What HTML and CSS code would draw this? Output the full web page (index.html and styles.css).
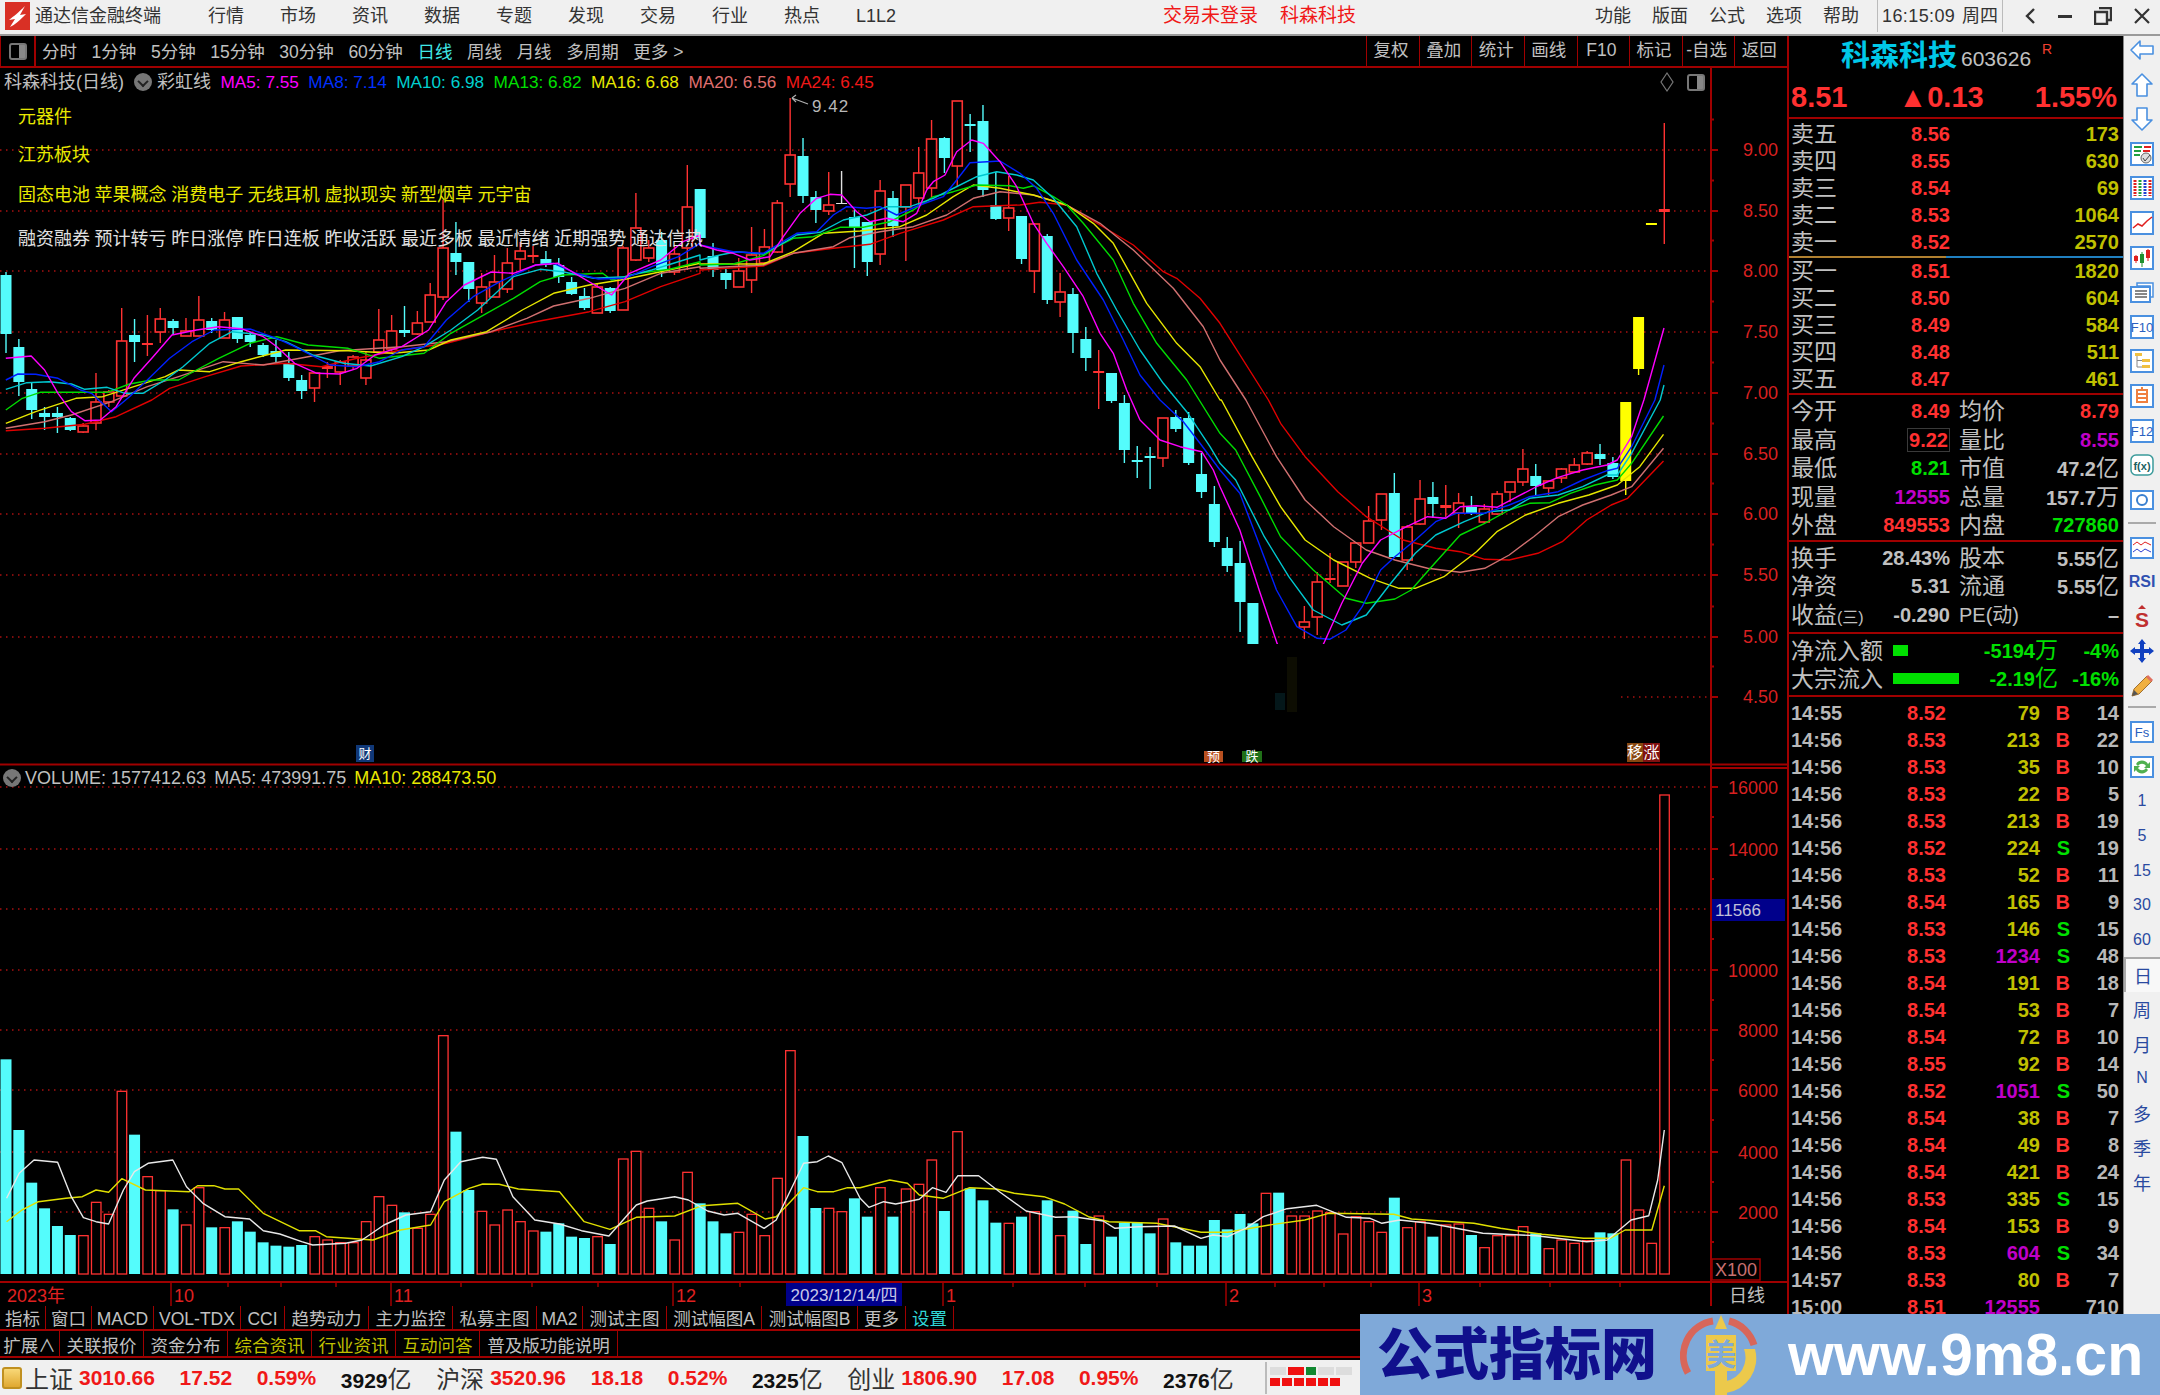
FILE: index.html
```html
<!DOCTYPE html>
<html lang="zh-CN">
<head>
  <meta charset="UTF-8">
  <title>通达信金融终端</title>
  <link rel="stylesheet" href="styles.css">
</head>
<body>
  <div class="menubar">
    <svg class="logo" viewBox="0 0 25 28"><rect width="25" height="28" fill="#d93025"/><path d="M4 18 C9 14 13 11 20 4 L15 13 L21 12 C15 18 10 23 5 25 L10 17 Z" fill="#fff"/></svg>
    <span class="brand">通达信金融终端</span>
    <nav class="menu-nav">
      <span>行情</span><span>市场</span><span>资讯</span><span>数据</span><span>专题</span><span>发现</span><span>交易</span><span>行业</span><span>热点</span><span>L1L2</span>
    </nav>
    <div class="menu-alert"><span>交易未登录</span><span>科森科技</span></div>
    <div class="menu-right">
      <span>功能</span><span>版面</span><span>公式</span><span>选项</span><span>帮助</span>
      <div class="clock"><span class="clock-time">16:15:09</span><span>周四</span></div>
      <div class="win-btns">
        <svg width="11" height="18" viewBox="0 0 11 18"><path d="M9 2 L2 9 L9 16" fill="none" stroke="#333" stroke-width="2.4"/></svg>
        <svg width="14" height="18" viewBox="0 0 14 18"><rect y="8" width="14" height="3" fill="#333"/></svg>
        <svg width="18" height="18" viewBox="0 0 18 18"><path d="M5 1 H17 V13 H13 M1 5 H13 V17 H1 Z" fill="none" stroke="#333" stroke-width="2.4"/></svg>
        <svg width="16" height="18" viewBox="0 0 16 18"><path d="M1 2 L15 16 M15 2 L1 16" stroke="#333" stroke-width="2.2"/></svg>
      </div>
    </div>
  </div>

  <div class="main">
    <div class="left">
      <div class="period-bar">
        <div class="toggle-cell"><span class="toggle-box"></span></div>
        <div class="periods">
          <span>分时</span><span>1分钟</span><span>5分钟</span><span>15分钟</span><span>30分钟</span><span>60分钟</span><span class="on">日线</span><span>周线</span><span>月线</span><span>多周期</span><span>更多 &gt;</span>
        </div>
        <div class="tools">
          <span>复权</span><span>叠加</span><span>统计</span><span>画线</span><span>F10</span><span>标记</span><span>-自选</span><span>返回</span>
        </div>
      </div>

      <div class="chart-wrap">
        <svg id="chart" class="chart" width="1788" height="1238" viewBox="0 68 1788 1238"></svg>

        <div class="legend legend-price">
          <span class="grey leg-cn">科森科技(日线)</span>
          <span class="drop"></span>
          <span class="grey leg-cn">彩虹线</span>
          <span class="c-ma5">MA5: 7.55</span>
          <span class="c-ma8">MA8: 7.14</span>
          <span class="c-ma10">MA10: 6.98</span>
          <span class="c-ma13">MA13: 6.82</span>
          <span class="c-ma16">MA16: 6.68</span>
          <span class="c-ma20">MA20: 6.56</span>
          <span class="c-ma24">MA24: 6.45</span>
        </div>

        <div class="tags">
          <div>元器件</div>
          <div>江苏板块</div>
          <div class="tag-mid">固态电池 苹果概念 消费电子 无线耳机 虚拟现实 新型烟草 元宇宙</div>
          <div class="tag-white">融资融券 预计转亏 昨日涨停 昨日连板 昨收活跃 最近多板 最近情绪 近期强势 通达信热</div>
        </div>

        <div class="corner-marks">
          <svg width="14" height="22" viewBox="0 0 14 22"><path d="M7 2 L13 11 L7 20 L1 11 Z" fill="none" stroke="#777" stroke-width="1.2"/></svg>
          <span class="toggle-box"></span>
        </div>

        <div class="legend legend-vol">
          <span class="drop"></span>
          <span class="grey">VOLUME: 1577412.63</span>
          <span class="grey">MA5: 473991.75</span>
          <span class="c-ma16">MA10: 288473.50</span>
        </div>
      </div>

      <div class="tab-row">
        <span class="tab w46">指标</span><span class="tab w46">窗口</span><span class="tab w62">MACD</span><span class="tab w87">VOL-TDX</span><span class="tab w44">CCI</span><span class="tab w84">趋势动力</span><span class="tab w84">主力监控</span><span class="tab w84">私募主图</span><span class="tab w46">MA2</span><span class="tab w84">测试主图</span><span class="tab w95">测试幅图A</span><span class="tab w96">测试幅图B</span><span class="tab w48">更多</span><span class="tab w48 tab-cyan">设置</span>
      </div>
      <div class="tab-row tab-row-2">
        <span class="tab w60">扩展∧</span><span class="tab w84">关联报价</span><span class="tab w84">资金分布</span><span class="tab w84 tab-olive">综合资讯</span><span class="tab w84 tab-olive">行业资讯</span><span class="tab w84 tab-olive">互动问答</span><span class="tab w138">普及版功能说明</span>
      </div>
    </div>

    <div class="quote">
      <div class="q-head">
        <span class="q-name">科森科技</span><span class="q-code">603626</span><span class="q-r">R</span>
      </div>
      <div class="q-price">
        <span>8.51</span><span>▲0.13</span><span>1.55%</span>
      </div>

      <div class="book book-sell">
        <div class="book-row"><span>卖五</span><b class="red">8.56</b><b class="olive">173</b></div>
        <div class="book-row"><span>卖四</span><b class="red">8.55</b><b class="olive">630</b></div>
        <div class="book-row"><span>卖三</span><b class="red">8.54</b><b class="olive">69</b></div>
        <div class="book-row"><span>卖二</span><b class="red">8.53</b><b class="olive">1064</b></div>
        <div class="book-row"><span>卖一</span><b class="red">8.52</b><b class="olive">2570</b></div>
      </div>
      <div class="book-split"></div>
      <div class="book q-sect">
        <div class="book-row"><span>买一</span><b class="red">8.51</b><b class="olive">1820</b></div>
        <div class="book-row"><span>买二</span><b class="red">8.50</b><b class="olive">604</b></div>
        <div class="book-row"><span>买三</span><b class="red">8.49</b><b class="olive">584</b></div>
        <div class="book-row"><span>买四</span><b class="red">8.48</b><b class="olive">511</b></div>
        <div class="book-row"><span>买五</span><b class="red">8.47</b><b class="olive">461</b></div>
      </div>

      <div class="stats q-sect">
        <div class="stat-row"><span>今开</span><b class="red">8.49</b><span>均价</span><b class="red">8.79</b></div>
        <div class="stat-row"><span>最高</span><b class="red"><i class="hi-box">9.22</i></b><span>量比</span><b class="purple">8.55</b></div>
        <div class="stat-row"><span>最低</span><b class="green">8.21</b><span>市值</span><b class="grey">47.2<i class="unit">亿</i></b></div>
        <div class="stat-row"><span>现量</span><b class="purple">12555</b><span>总量</span><b class="grey">157.7<i class="unit">万</i></b></div>
        <div class="stat-row"><span>外盘</span><b class="red">849553</b><span>内盘</span><b class="green">727860</b></div>
      </div>
      <div class="stats q-sect q-sect-pad">
        <div class="stat-row"><span>换手</span><b class="grey">28.43%</b><span>股本</span><b class="grey">5.55<i class="unit">亿</i></b></div>
        <div class="stat-row"><span>净资</span><b class="grey">5.31</b><span>流通</span><b class="grey">5.55<i class="unit">亿</i></b></div>
        <div class="stat-row"><span class="nowrap">收益<i class="tiny">(三)</i></span><b class="grey">-0.290</b><span class="nowrap pe">PE(动)</span><b class="grey">–</b></div>
      </div>
      <div class="flow q-sect q-sect-pad">
        <div class="flow-row"><span>净流入额</span><div class="flow-bar" style="width:15px"></div><b class="green">-5194<i class="unit">万</i></b><b class="green">-4%</b></div>
        <div class="flow-row"><span>大宗流入</span><div class="flow-bar" style="width:66px"></div><b class="green">-2.19<i class="unit">亿</i></b><b class="green">-16%</b></div>
      </div>

      <div class="trades">
        <div class="trade"><b>14:55</b><b class="red">8.52</b><b class="olive">79</b><b class="red">B</b><b>14</b></div>
        <div class="trade"><b>14:56</b><b class="red">8.53</b><b class="olive">213</b><b class="red">B</b><b>22</b></div>
        <div class="trade"><b>14:56</b><b class="red">8.53</b><b class="olive">35</b><b class="red">B</b><b>10</b></div>
        <div class="trade"><b>14:56</b><b class="red">8.53</b><b class="olive">22</b><b class="red">B</b><b>5</b></div>
        <div class="trade"><b>14:56</b><b class="red">8.53</b><b class="olive">213</b><b class="red">B</b><b>19</b></div>
        <div class="trade"><b>14:56</b><b class="red">8.52</b><b class="olive">224</b><b class="green">S</b><b>19</b></div>
        <div class="trade"><b>14:56</b><b class="red">8.53</b><b class="olive">52</b><b class="red">B</b><b>11</b></div>
        <div class="trade"><b>14:56</b><b class="red">8.54</b><b class="olive">165</b><b class="red">B</b><b>9</b></div>
        <div class="trade"><b>14:56</b><b class="red">8.53</b><b class="olive">146</b><b class="green">S</b><b>15</b></div>
        <div class="trade"><b>14:56</b><b class="red">8.53</b><b class="purple">1234</b><b class="green">S</b><b>48</b></div>
        <div class="trade"><b>14:56</b><b class="red">8.54</b><b class="olive">191</b><b class="red">B</b><b>18</b></div>
        <div class="trade"><b>14:56</b><b class="red">8.54</b><b class="olive">53</b><b class="red">B</b><b>7</b></div>
        <div class="trade"><b>14:56</b><b class="red">8.54</b><b class="olive">72</b><b class="red">B</b><b>10</b></div>
        <div class="trade"><b>14:56</b><b class="red">8.55</b><b class="olive">92</b><b class="red">B</b><b>14</b></div>
        <div class="trade"><b>14:56</b><b class="red">8.52</b><b class="purple">1051</b><b class="green">S</b><b>50</b></div>
        <div class="trade"><b>14:56</b><b class="red">8.54</b><b class="olive">38</b><b class="red">B</b><b>7</b></div>
        <div class="trade"><b>14:56</b><b class="red">8.54</b><b class="olive">49</b><b class="red">B</b><b>8</b></div>
        <div class="trade"><b>14:56</b><b class="red">8.54</b><b class="olive">421</b><b class="red">B</b><b>24</b></div>
        <div class="trade"><b>14:56</b><b class="red">8.53</b><b class="olive">335</b><b class="green">S</b><b>15</b></div>
        <div class="trade"><b>14:56</b><b class="red">8.54</b><b class="olive">153</b><b class="red">B</b><b>9</b></div>
        <div class="trade"><b>14:56</b><b class="red">8.53</b><b class="purple">604</b><b class="green">S</b><b>34</b></div>
        <div class="trade"><b>14:57</b><b class="red">8.53</b><b class="olive">80</b><b class="red">B</b><b>7</b></div>
        <div class="trade"><b>15:00</b><b class="red">8.51</b><b class="purple">12555</b><b></b><b>710</b></div>
      </div>
    </div>

    <div class="sidebar">
      <div class="side-item"><svg width="26" height="22" viewBox="0 0 26 22"><path d="M2 11 L11 2 V7 H24 V15 H11 V20 Z" class="arrow"/></svg></div>
      <div class="side-item"><svg width="24" height="26" viewBox="0 0 24 26"><path d="M12 2 L22 12 H17 V24 H7 V12 H2 Z" class="arrow"/></svg></div>
      <div class="side-item"><svg width="24" height="26" viewBox="0 0 24 26"><path d="M12 24 L22 14 H17 V2 H7 V14 H2 Z" class="arrow"/></svg></div>
      <div class="side-item"><svg width="24" height="24" viewBox="0 0 24 24"><rect x="1" y="1" width="22" height="22" class="box"/><path d="M4 5 H12 M4 9 H11 M4 13 H10" stroke="#20a040" stroke-width="2"/><path d="M14 5 H21 M13 9 H20" stroke="#e02020" stroke-width="2"/><circle cx="16" cy="16" r="5" fill="#ddd" stroke="#666"/><path d="M13 16 L15 19 L20 13" fill="none" stroke="#444"/></svg></div>
      <div class="side-item"><svg width="24" height="24" viewBox="0 0 24 24"><rect x="1" y="1" width="22" height="22" class="box"/><path d="M5 4 V20" stroke="#e02020" stroke-width="3" stroke-dasharray="2 1"/><path d="M10 4 V20" stroke="#20a040" stroke-width="3" stroke-dasharray="2 1"/><path d="M15 4 V20" stroke="#2040d0" stroke-width="3" stroke-dasharray="2 1"/><path d="M20 4 V20" stroke="#e02020" stroke-width="3" stroke-dasharray="2 1"/></svg></div>
      <div class="side-item"><svg width="24" height="24" viewBox="0 0 24 24"><rect x="1" y="1" width="22" height="22" class="box"/><path d="M3 17 L8 13 L12 15 L17 10 L22 6" fill="none" stroke="#e02020" stroke-width="1.5"/></svg></div>
      <div class="side-item"><svg width="24" height="24" viewBox="0 0 24 24"><rect x="1" y="1" width="22" height="22" class="box"/><path d="M6 9 V17 M18 3 V15" stroke="#e02020"/><rect x="4" y="10" width="4" height="5" fill="#e02020"/><path d="M12 6 V21" stroke="#209030"/><rect x="10" y="8" width="4" height="9" fill="#209030"/><rect x="16" y="4" width="4" height="8" fill="#e02020"/></svg></div>
      <div class="side-item"><svg width="24" height="24" viewBox="0 0 24 24"><path d="M7 3 H23 V17 H20 V6 H7 Z" fill="#fff" stroke="#4a90e0" stroke-width="1.5"/><rect x="1" y="7" width="19" height="15" class="box"/><path d="M5 11 H17 M5 14 H17 M5 17 H17" stroke="#888" stroke-width="2"/></svg></div>
      <div class="side-item"><svg width="24" height="24" viewBox="0 0 24 24"><rect x="1" y="1" width="22" height="22" class="box"/><text x="12" y="17" class="ico-text">F10</text></svg></div>
      <div class="side-item"><svg width="24" height="24" viewBox="0 0 24 24"><rect x="1" y="1" width="22" height="22" class="box"/><rect x="5" y="4" width="7" height="3" fill="#f0c040"/><rect x="12" y="10" width="8" height="3" fill="#f0c040"/><rect x="12" y="16" width="8" height="3" fill="#f0c040"/><path d="M7 7 V18 H12 M7 11.500 H12" fill="none" stroke="#888"/></svg></div>
      <div class="side-item"><svg width="24" height="24" viewBox="0 0 24 24"><rect x="1" y="1" width="22" height="22" class="box"/><path d="M7 6 H17 V18 H7 Z M7 10 H17 M7 14 H17 M12 3 V6" fill="none" stroke="#f08040" stroke-width="2"/></svg></div>
      <div class="side-item"><svg width="24" height="24" viewBox="0 0 24 24"><rect x="1" y="1" width="22" height="22" class="box"/><text x="12" y="17" class="ico-text">F12</text></svg></div>
      <div class="side-item"><svg width="24" height="24" viewBox="0 0 24 24"><rect x="1" y="2" width="22" height="20" rx="5" fill="#fff" stroke="#3a9a9a" stroke-width="1.5"/><text x="12" y="17" class="ico-text ico-fx">f(x)</text></svg></div>
      <div class="side-item"><svg width="24" height="24" viewBox="0 0 24 24"><rect x="1" y="3" width="22" height="18" class="box"/><circle cx="12" cy="12" r="5" fill="none" stroke="#3a80d0" stroke-width="2"/></svg></div>
      <div class="side-sep side-sep-a"></div>
      <div class="side-item"><svg width="24" height="22" viewBox="0 0 24 22"><rect x="1" y="1" width="22" height="20" class="box"/><path d="M3 8 L7 5 L11 8 L15 5 L21 8" fill="none" stroke="#e02020"/><path d="M3 15 L7 12 L11 15 L15 12 L21 15" fill="none" stroke="#3040d0"/></svg></div>
      <div class="side-item rsi">RSI</div>
      <div class="side-item"><svg width="24" height="26" viewBox="0 0 24 26"><path d="M12 1 L16 5 H8 Z" fill="#c03030"/><text x="12" y="23" class="ico-s">S</text></svg></div>
      <div class="side-item"><svg width="26" height="26" viewBox="0 0 26 26"><path d="M13 1 L17 6 H15 V11 H20 V9 L25 13 L20 17 V15 H15 V20 H17 L13 25 L9 20 H11 V15 H6 V17 L1 13 L6 9 V11 H11 V6 H9 Z" fill="#1040c0"/></svg></div>
      <div class="side-item"><svg width="26" height="26" viewBox="0 0 26 26"><path d="M3 23 L5 16 L18 3 L23 8 L10 21 Z" fill="#f0b040" stroke="#a07030"/><path d="M18 3 L23 8" stroke="#e07060" stroke-width="3"/><path d="M3 23 L5 17 L9 21 Z" fill="#555"/></svg></div>
      <div class="side-sep side-sep-b"></div>
      <div class="side-item"><svg width="24" height="22" viewBox="0 0 24 22"><rect x="1" y="1" width="22" height="20" class="box"/><text x="12" y="16" class="ico-text">Fs</text></svg></div>
      <div class="side-item"><svg width="24" height="22" viewBox="0 0 24 22"><rect x="1" y="1" width="22" height="20" class="box"/><path d="M6 8 C9 3 16 4 18 8 L20 6 V12 H14 L16 10 C14 7 10 7 8 10 Z M18 14 C15 19 8 18 6 14 L4 16 V10 H10 L8 12 C10 15 14 15 16 12 Z" fill="#50b050"/></svg></div>
      <div class="side-item side-num">1</div>
      <div class="side-item side-num">5</div>
      <div class="side-item side-num">15</div>
      <div class="side-item side-num">30</div>
      <div class="side-item side-num">60</div>
      <div class="side-item side-char side-on">日</div>
      <div class="side-item side-char">周</div>
      <div class="side-item side-char">月</div>
      <div class="side-item side-num">N</div>
      <div class="side-item side-char">多</div>
      <div class="side-item side-char">季</div>
      <div class="side-item side-char">年</div>
    </div>
  </div>

  <div class="statusbar">
    <span class="st-logo"></span>
    <span class="st-name">上证</span><b class="st-red">3010.66</b>
    <b class="st-red">17.52</b>
    <b class="st-red">0.59%</b>
    <b class="st-amt">3929<i class="st-unit">亿</i></b>
    <span class="st-name">沪深</span><b class="st-red">3520.96</b>
    <b class="st-red">18.18</b>
    <b class="st-red">0.52%</b>
    <b class="st-amt">2325<i class="st-unit">亿</i></b>
    <span class="st-name">创业</span><b class="st-red">1806.90</b>
    <b class="st-red">17.08</b>
    <b class="st-red">0.95%</b>
    <b class="st-amt">2376<i class="st-unit">亿</i></b>
    <div class="meter">
      <div class="meter-top"><i></i><i class="m-red"></i><i class="m-green"></i><i></i><i></i></div>
      <div class="meter-low"><i></i><i></i><i></i><i></i><i></i><i></i></div>
    </div>
  </div>

  <div class="watermark">
    <span class="wm-cn">公式指标网</span>
    <svg class="wm-logo" width="82" height="80" viewBox="0 0 82 80">
      <path d="M8 58 A35 35 0 0 1 33 6" fill="none" stroke="#d8665a" stroke-width="7"/>
      <path d="M49 6 A35 35 0 0 1 74 30" fill="none" stroke="#d8665a" stroke-width="7"/>
      <path d="M75 34 A35 35 0 0 1 46 78 L46 66 A24 24 0 0 0 64 34 Z" fill="#ecc94b"/>
      <rect x="26" y="20" width="30" height="36" fill="#ecc94b"/>
      <path d="M41 0 L47 14 H35 Z" fill="#ecc94b"/>
      <rect x="35" y="54" width="12" height="26" fill="#ecc94b"/>
      <text x="41" y="50" class="wm-glyph">美</text>
    </svg>
    <span class="wm-url">www.9m8.cn</span>
  </div>

  <script src="chart.js"></script>
</body>
</html>
```

FILE: styles.css
```css
* { box-sizing: border-box; }
html, body {
  margin: 0;
  width: 2160px;
  height: 1395px;
  overflow: hidden;
  background: #000;
  font-family: "Liberation Sans", "Noto Sans CJK SC", sans-serif;
  color: #c0c0c0;
}
b { font-weight: bold; }
i { font-style: normal; }

/* top menu */
.menubar {
  display: flex;
  align-items: center;
  height: 36px;
  padding: 0 10px 2px 5px;
  background: #f0f0f0;
  border-bottom: 2px solid #9a9a9a;
  color: #333;
  font-size: 18px;
  line-height: 24px;
}
.logo { width: 25px; height: 28px; flex: none; }
.brand { margin-left: 5px; width: 127px; white-space: nowrap; }
.menu-nav { display: flex; align-items: center; gap: 36px; margin-left: 46px; white-space: nowrap; }
.menu-nav span { height: 24px; }
.menu-alert { display: flex; gap: 22px; margin-left: 267px; color: #f01818; font-size: 19px; white-space: nowrap; }
.menu-right { display: flex; align-items: center; gap: 21px; margin-left: auto; white-space: nowrap; }
.clock {
  display: flex;
  gap: 8px;
  height: 32px;
  align-items: center;
  padding: 0 4px;
  margin-left: -3px;
  border-left: 1px solid #bbb;
  border-right: 1px solid #bbb;
}
.clock-time { width: 72px; letter-spacing: .4px; }
.win-btns { display: flex; align-items: center; gap: 22px; margin-left: 1px; }

/* main area */
.main { display: flex; height: 1324px; }
.left { width: 1787px; flex: none; }

.period-bar {
  display: flex;
  height: 32px;
  border-bottom: 2px solid #a00000;
  font-size: 17.5px;
  white-space: nowrap;
}
.toggle-cell {
  display: flex;
  align-items: center;
  justify-content: center;
  width: 36px;
  border-right: 2px solid #a00000;
  border-left: 1px solid #a00000;
}
.toggle-box {
  display: block;
  width: 18px;
  height: 17px;
  border: 2px solid #777;
  border-radius: 3px;
  background: linear-gradient(90deg, #000 60%, #888 60%);
}
.periods { display: flex; align-items: center; gap: 14.600px; margin-left: 6px; padding-bottom: 2px; }
.periods .on { color: #40e8e8; }
.tools { display: flex; margin-left: auto; }
.tools span {
  width: 52.600px;
  padding-right: 4px;
  border-left: 1px solid #a00000;
  text-align: center;
  line-height: 28px;
}

/* charts */
.chart-wrap { position: relative; height: 1238px; }
.chart { display: block; }
.legend {
  position: absolute;
  display: flex;
  align-items: center;
  font-size: 17.2px;
  white-space: nowrap;
  line-height: 20px;
}
.legend-price { left: 4px; top: 4px; gap: 9.500px; }
.leg-cn { font-size: 18px; }
.legend-price .drop { margin-right: -4px; }
.legend-vol { left: 3px; top: 700px; gap: 8px; font-size: 18px; }
.legend-vol .drop { margin-right: -4px; }
.drop {
  display: block;
  width: 18px;
  height: 18px;
  border-radius: 50%;
  background: #777;
  position: relative;
}
.drop::after {
  content: "";
  position: absolute;
  left: 5px;
  top: 6px;
  width: 6px;
  height: 6px;
  border-right: 2px solid #222;
  border-bottom: 2px solid #222;
  transform: rotate(45deg) translate(-1px, -1px);
}
.grey { color: #c0c0c0; }
.c-ma5 { color: #ff00ff; }
.c-ma8 { color: #0030ff; }
.c-ma10 { color: #00d0d0; }
.c-ma13 { color: #00e000; }
.c-ma16 { color: #e8e800; }
.c-ma20 { color: #e07070; }
.c-ma24 { color: #f01818; }

.tags {
  position: absolute;
  left: 18px;
  top: 37px;
  display: flex;
  flex-direction: column;
  gap: 14px;
  color: #e8e800;
  font-size: 18px;
  line-height: 24px;
  white-space: nowrap;
  word-spacing: -.4px;
}
.tag-mid { margin-top: 2px; }
.tag-white { margin-top: 6px; color: #e0e0e0; }

.corner-marks {
  position: absolute;
  right: 82px;
  top: 3px;
  display: flex;
  align-items: center;
  gap: 13px;
}

.dot-line { stroke: #a81010; stroke-width: 1.5; stroke-dasharray: 1.5 4.5; }
.axis-line { stroke: #a00000; stroke-width: 2; }
.axis-label { fill: #d82020; font-size: 18px; text-anchor: end; }
.date-label { fill: #e02020; font-size: 18px; }
.date-focus { fill: #c8c8e8; font-size: 17px; text-anchor: middle; }
.date-period { fill: #c0c0c0; font-size: 18px; }
.box-label { fill: #c0c0d8; font-size: 17px; text-anchor: middle; }
.x-label { fill: #c87070; font-size: 18px; text-anchor: middle; }
.note-label { fill: #b8b8b8; font-size: 17px; letter-spacing: 1px; }
.note-line { stroke: #b0b0b0; stroke-width: 1.2; fill: none; }
.mark-label { fill: #fff; font-size: 13px; text-anchor: middle; }
.mark-wide { font-size: 16px; }

.ma { fill: none; stroke-width: 1.4; stroke-linejoin: round; }
.ma-5 { stroke: #ff00ff; }
.ma-8 { stroke: #0020ff; }
.ma-10 { stroke: #00c8d0; }
.ma-13 { stroke: #00dc00; }
.ma-16 { stroke: #e6e600; }
.ma-20 { stroke: #d07070; }
.ma-24 { stroke: #e00000; }
.vol-5 { stroke: #e8e8e8; }
.vol-10 { stroke: #e0e000; }

/* bottom tabs */
.tab-row {
  display: flex;
  height: 25px;
  border-bottom: 2px solid #a00000;
  font-size: 17.500px;
  white-space: nowrap;
}
.tab-row-2 { height: 27px; }
.tab {
  border-right: 1px solid #a00000;
  text-align: center;
  line-height: 27px;
}
.tab-row-2 .tab { line-height: 30px; }
.w44 { width: 44px; }
.w46 { width: 46px; }
.w48 { width: 48px; }
.w60 { width: 60px; }
.w62 { width: 62px; }
.w84 { width: 84px; }
.w87 { width: 87px; }
.w95 { width: 95px; }
.w96 { width: 96px; }
.w138 { width: 138px; }
.tab-cyan { color: #30d8d8; }
.tab-olive { color: #c0c000; }

/* quote panel */
.quote {
  width: 336px;
  flex: none;
  border-left: 2px solid #a00000;
  overflow: hidden;
}
.q-head {
  display: flex;
  align-items: baseline;
  height: 42px;
  padding-left: 52px;
  line-height: 40px;
}
.q-name { color: #00c8e8; font-size: 29px; font-weight: bold; }
.q-code { margin-left: 4px; font-size: 21px; color: #c0c0c0; }
.q-r { margin-left: 11px; font-size: 14px; color: #f04030; align-self: flex-start; line-height: 26px; }
.q-price {
  display: flex;
  height: 41px;
  padding: 0 6px 0 2px;
  justify-content: space-between;
  align-items: center;
  border-bottom: 2px solid #a00000;
  color: #ff3030;
  font-size: 29px;
  font-weight: bold;
}
.book-sell { padding-top: 2px; }
.q-sect { border-bottom: 2px solid #a00000; }
.q-sect-pad { padding-bottom: 3px; }
.book-row, .stat-row, .flow-row, .trade { display: grid; padding-left: 2px; }
.book-row {
  grid-template-columns: 60px 99px 169px;
  height: 27px;
  line-height: 27px;
  font-size: 23px;
}
.book-row b, .stat-row b, .flow-row b, .trade b { font-size: 20px; text-align: right; }
.book-split {
  height: 2px;
  background: linear-gradient(90deg, #b08030 47%, #2080c0 47%);
}
.stats { padding-top: 2px; }
.stat-row {
  grid-template-columns: 60px 99px 80px 89px;
  height: 28.500px;
  line-height: 28px;
  font-size: 23px;
}
.stat-row > span:nth-child(3) { padding-left: 9px; }
.nowrap { white-space: nowrap; }
.tiny { font-size: 16px; }
.pe { font-size: 20px; }
.hi-box { border: 1.500px solid #3a3a3a; padding: 0 1px; }
.unit { font-size: 23px; font-weight: normal; }
.flow { padding-top: 2px; }
.flow-row {
  grid-template-columns: 102px 66px 99px 61px;
  height: 28px;
  line-height: 28px;
  font-size: 23px;
  align-items: center;
}
.flow-row .flow-bar { height: 11px; background: #00e000; }
.trades { padding-top: 3px; }
.trade {
  grid-template-columns: 60px 95px 94px 30px 49px;
  height: 27px;
  line-height: 27px;
  color: #b8b8b8;
}
.trade b:first-child { text-align: left; }
.red { color: #ff3030; }
.olive { color: #c0c000; }
.green { color: #00e000; }
.purple { color: #c000c8; }

/* right toolbar */
.sidebar {
  flex: 1;
  background: #f0f0f0;
  border-left: 1px solid #888;
  color: #2a4aa0;
}
.side-item {
  display: flex;
  height: 34.600px;
  align-items: center;
  justify-content: center;
}
.side-item:first-child { margin-top: -3.300px; }
.side-sep { height: 2px; margin: 0 4px; background: #aaa; }
.side-sep-a { margin-top: 5px; margin-bottom: 6.400px; }
.side-sep-b { margin-top: 3px; margin-bottom: 6.500px; }
.side-num { font-size: 16px; }
.side-char { font-size: 18px; }
.side-on { background: #f8f8f8; border-left: 2px solid #aaa; border-top: 2px solid #aaa; }
.rsi { font-size: 16px; font-weight: bold; color: #3050b0; }
.arrow { fill: #fff; stroke: #4a90e0; stroke-width: 1.6; stroke-linejoin: round; }
.box { fill: #fff; stroke: #4a90e0; stroke-width: 2; }
.ico-text { fill: #2a60c0; font-size: 13px; text-anchor: middle; }
.ico-fx { font-size: 11px; font-weight: bold; fill: #206060; }
.ico-s { fill: #c03030; font-size: 21px; font-weight: bold; text-anchor: middle; }

/* status bar */
.statusbar {
  display: flex;
  align-items: center;
  height: 35px;
  padding-left: 2px;
  gap: 24.600px;
  background: #f0f0f0;
  white-space: nowrap;
  font-size: 21px;
  color: #111;
}
.st-logo {
  width: 20px;
  height: 22px;
  margin-right: -21.600px;
  border: 2px solid #c09020;
  border-radius: 3px;
  background: linear-gradient(#f8d878, #e0a830);
}
.st-name { margin-right: -18.600px; font-size: 24px; color: #333; }
.st-red { color: #f01818; }
.st-amt { color: #111; }
.st-unit { font-size: 24px; font-weight: normal; color: #333; }
.meter {
  margin-left: 7px;
  padding-left: 3px;
  height: 32px;
  border-left: 2px solid #bbb;
}
.meter-top { display: flex; gap: 2px; margin-top: 5px; }
.meter-top i { width: 16px; height: 8px; background: #ddd; }
.meter-top .m-red { background: #f01010; }
.meter-top .m-green { width: 10px; background: #108830; }
.meter-low { display: flex; gap: 2px; margin-top: 3px; }
.meter-low i { width: 10px; height: 8px; background: #f01010; }

/* site watermark pasted over the corner */
.watermark {
  position: absolute;
  left: 1360px;
  top: 1314px;
  width: 800px;
  height: 81px;
  display: flex;
  align-items: center;
  background: #7fa9d9;
  padding-left: 17px;
}
.wm-cn { width: 285px; color: #10108c; font-size: 56px; font-weight: 900; line-height: 81px; white-space: nowrap; }
.wm-logo { margin-left: 18px; flex: none; }
.wm-glyph { fill: #7fa9d9; font-size: 30px; font-weight: bold; text-anchor: middle; }
.wm-url { margin-left: 26px; color: #fff; font-size: 59px; font-weight: bold; white-space: nowrap; }
```

FILE: chart.js
```js
const NS = 'http://www.w3.org/2000/svg';
const svg = document.getElementById('chart');

function add(tag, attrs, text) {
  const el = document.createElementNS(NS, tag);
  for (const k in attrs) el.setAttribute(k, attrs[k]);
  if (text !== undefined) el.textContent = text;
  svg.appendChild(el);
  return el;
}

const CYAN = '#54fcfc';
const RED = '#ff3232';
const YELLOW = '#ffff00';
const barX = i => 6 + i * 12.855;

// grid lines
const priceRows = [[9.00, 150], [8.50, 211], [8.00, 271], [7.50, 332], [7.00, 393], [6.50, 454], [6.00, 514], [5.50, 575], [5.00, 637], [4.50, 697]];
const volRows = [[16000, 787], [14000, 849], [12000, 909], [10000, 970], [8000, 1030], [6000, 1090], [4000, 1152], [2000, 1212]];

priceRows.forEach(([p, y]) => {
  const from = p === 4.5 ? 1621 : 0;
  add('line', { x1: from, x2: 1710, y1: y, y2: y, class: 'dot-line' });
});
volRows.forEach(([v, y]) => {
  add('line', { x1: 0, x2: 1710, y1: y, y2: y, class: 'dot-line' });
});

// candles: type, body top, body bottom, high, low (pixels of the pane)
const candles = [
  ['c',275,334,272,353],['c',347,382,339,396],['c',389,410,383,419],['c',413,417,407,430],['c',413,417,407,433],
  ['c',418,430,417,431],['r',426,432,423,433],['r',402,423,373,430],['r',392,402,390,407],['r',341,396,308,397],
  ['c',335,342,319,362],['r',343,345,315,356],['r',319,332,308,343],['c',321,328,319,335],['r',331,336,318,336],
  ['r',320,336,296,336],['c',321,330,318,333],['r',320,338,312,338],['c',317,339,317,343],['c',335,342,332,347],
  ['c',345,355,343,357],['c',351,357,340,362],['c',363,378,352,381],['c',380,391,375,399],['r',373,388,373,402],
  ['r',366,369,362,378],['r',362,372,360,385],['r',357,366,355,369],['r',360,378,352,385],['r',340,352,309,353],
  ['r',331,349,315,353],['c',330,333,306,337],['r',323,334,311,335],['r',295,322,283,322],['r',248,297,200,300],
  ['c',253,262,222,275],['c',262,289,262,302],['r',287,303,273,313],['r',282,297,255,297],['r',263,289,248,293],
  ['r',251,259,242,270],['r',255,257,246,263],['c',259,265,251,267],['c',265,277,258,283],['c',282,294,277,295],
  ['c',296,308,288,310],['r',287,313,283,313],['c',288,311,287,313],['r',248,310,246,310],['r',228,260,193,261],
  ['r',248,258,240,262],['c',240,270,232,277],['r',254,272,245,275],['r',207,248,165,270],['c',189,238,189,245],
  ['c',256,270,243,277],['c',273,280,268,289],['r',271,287,258,287],['r',255,280,227,293],['r',247,263,229,265],
  ['r',203,252,200,253],['r',155,184,98,197],['c',156,196,138,203],['c',197,210,191,223],['r',205,211,172,215],
  ['w',203,204,171,204],['c',217,228,210,268],['c',222,262,222,276],['r',191,254,180,265],['c',198,226,191,237],
  ['r',185,207,185,261],['r',173,198,147,207],['r',139,188,120,197],['c',138,158,137,173],['r',101,166,101,187],
  ['c',124,126,114,152],['c',121,190,105,197],['c',205,219,172,220],['r',208,218,176,231],['c',216,259,216,264],
  ['r',224,271,223,293],['c',236,300,234,304],['r',292,302,273,317],['c',294,333,288,353],['c',339,358,327,371],
  ['r',371,373,350,409],['c',373,401,373,403],['c',403,450,395,463],['c',460,462,446,478],['c',456,458,447,489],
  ['r',418,458,418,467],['c',417,429,410,432],['c',418,463,412,465],['c',474,492,453,498],['c',504,542,486,547],
  ['c',548,566,537,572],['c',563,602,541,632],['c',603,644,603,644],null,null,
  null,['r',622,627,606,639],['r',582,617,572,635],['r',578,580,553,583],['r',562,586,562,586],
  ['r',543,562,542,568],['r',521,543,506,543],['r',494,520,494,530],['c',493,557,473,558],['r',527,560,525,570],
  ['r',499,524,480,525],['c',497,504,482,518],['r',505,508,485,517],['r',503,513,493,528],['c',507,513,496,515],
  ['r',509,522,504,523],['r',494,514,491,515],['r',482,492,482,502],['r',469,482,449,486],['c',476,486,464,496],
  ['r',481,488,481,495],['r',469,478,468,483],['r',465,472,458,473],['r',453,464,451,465],['c',454,459,444,465],
  ['c',463,477,457,479],['y',402,481,402,495],['y',317,369,317,375],['y',223,225,223,225],['f',209,212,123,244]
];

candles.forEach((c, i) => {
  if (!c) return;
  const [type, top, bot, hi, lo] = c;
  const x = barX(i);
  const color = { c: CYAN, r: RED, w: '#e0e0e0', y: YELLOW, f: RED }[type];
  add('line', { x1: x, x2: x, y1: hi, y2: lo, stroke: color, 'stroke-width': 1.4 });
  const thin = bot - top <= 3;
  if (type === 'r' && !thin) {
    add('rect', { x: x - 5, y: top, width: 10, height: bot - top, fill: '#000', stroke: color, 'stroke-width': 1.6 });
  } else {
    add('rect', { x: x - 5.5, y: top, width: 11, height: bot - top, fill: color });
  }
});

// moving averages, read off in three crops: [u, v] pairs of each
const cropA = (u, v) => [u / 2.24, 230 + v / 3];
const cropB = (u, v) => [700 + u / 3, 90 + v / 3];
const cropC = (u, v) => [1150 + u / 2.45, 400 + v / 3];
const cropD = (u, v) => [u / 1.823, 1020 + v / 3];
const cropE = (u, v) => [860 + u / 1.686, 1020 + v / 3];

function readPts(list, crop, pts) {
  for (let n = 0; n < list.length; n += 2) {
    const p = crop(list[n], list[n + 1]);
    if (!pts.length || p[0] > pts[pts.length - 1][0]) pts.push(p);
  }
}

function drawLine(cls, parts, end) {
  const pts = [];
  parts.forEach(([list, crop]) => readPts(list, crop, pts));
  if (end) pts.push(end);
  add('polyline', { class: 'ma ' + cls, points: pts.map(p => p[0].toFixed(1) + ',' + p[1].toFixed(1)).join(' ') });
}

drawLine('ma-24', [
  [[13,602,100,595,190,583,260,560,340,510,380,475,460,440,540,408,640,400,720,410,800,385,900,360,1000,340,1100,305,1200,275,1320,245,1400,215,1480,170,1568,130], cropA],
  [[0,540,190,528,280,490,400,475,510,463,600,430,730,390,820,350,960,345,1020,337,1100,345,1200,405,1300,465,1390,545,1430,565,1500,625,1560,700], cropB],
  [[290,0,320,70,380,170,460,275,530,350,620,420,700,445,760,455,820,478,880,480,950,460,1010,425,1070,360,1130,315,1170,295,1258,183], cropC]
]);
drawLine('ma-20', [
  [[13,595,100,575,160,555,250,515,330,470,400,440,500,395,590,405,690,380,760,362,900,350,1000,335,1100,305,1180,265,1240,228,1320,205,1400,175,1480,130,1568,110], cropA],
  [[0,535,190,525,280,490,400,470,450,443,540,425,640,410,740,375,820,325,900,305,1000,315,1100,345,1200,400,1300,480,1420,595,1510,710,1560,810], cropB],
  [[235,0,310,170,380,300,450,380,530,450,600,480,680,505,760,517,820,505,880,465,940,410,1000,350,1060,315,1130,285,1180,260,1258,145], cropC]
]);
drawLine('ma-16', [
  [[13,580,80,545,170,505,230,500,300,470,370,440,400,420,470,425,540,395,640,360,780,362,880,370,960,360,1010,330,1090,305,1170,240,1240,190,1320,165,1400,148,1480,125,1568,100], cropA],
  [[0,522,190,522,280,485,370,430,480,423,600,410,680,375,760,320,820,285,900,295,1000,315,1100,345,1180,400,1240,460,1340,640,1430,760,1500,830,1560,930], cropB],
  [[175,0,250,170,320,320,380,420,450,480,540,535,610,565,650,565,720,530,800,455,850,395,920,345,1000,310,1075,285,1145,255,1200,200,1258,103], cropC]
]);
drawLine('ma-13', [
  [[13,540,50,505,90,487,240,487,290,462,340,450,400,450,440,420,490,385,560,340,620,320,690,345,780,355,850,385,950,370,1010,310,1090,250,1150,205,1210,155,1260,135,1350,130,1370,150,1430,130,1500,118,1568,95], cropA],
  [[0,525,100,522,190,497,240,465,280,445,340,440,420,412,490,412,570,395,640,360,700,320,760,305,830,285,930,287,970,295,1000,287,1060,320,1100,345,1150,400,1240,510,1300,640,1370,760,1460,870,1560,1030], cropB],
  [[125,0,210,150,270,290,320,410,400,510,480,595,530,610,600,597,640,570,690,500,760,405,820,370,880,330,930,310,980,308,1030,280,1090,255,1145,240,1180,190,1258,48], cropC]
]);
drawLine('ma-10', [
  [[13,478,60,458,110,455,160,462,190,478,240,472,280,490,320,490,370,450,410,410,470,340,520,305,590,315,640,335,700,375,770,400,830,408,900,380,950,350,1010,300,1070,240,1150,140,1210,118,1260,125,1330,145,1400,140,1460,120,1568,75], cropA],
  [[0,510,60,495,110,485,190,492,240,465,290,435,360,427,430,390,500,375,560,350,630,350,700,325,750,300,830,260,890,245,950,255,1000,270,1060,325,1130,410,1190,550,1250,660,1320,780,1390,880,1460,965,1530,1070,1560,1120], cropB],
  [[70,0,130,100,210,240,280,410,340,530,400,630,470,675,530,645,590,550,650,460,700,405,770,365,830,335,880,330,930,295,1000,285,1060,260,1120,225,1145,225,1180,160,1250,0], cropC]
], [1664, 385]);
drawLine('ma-8', [
  [[13,450,40,432,80,433,130,445,180,480,205,490,250,545,290,500,330,450,380,385,430,335,480,300,560,297,620,325,660,350,740,405,800,410,850,395,900,360,950,350,1000,270,1060,200,1120,155,1200,105,1240,100,1290,130,1340,147,1400,145,1460,110,1520,80,1568,40], cropA],
  [[0,465,100,485,190,490,240,460,290,430,350,425,400,375,440,350,500,355,540,350,590,375,660,345,730,320,770,270,810,218,900,213,960,250,1010,295,1060,370,1130,510,1210,630,1270,750,1320,855,1380,930,1450,995,1500,1060,1560,1140], cropB],
  [[20,0,100,110,160,190,220,280,270,440,310,570,360,680,410,715,440,718,480,690,520,620,565,510,600,470,650,420,700,365,750,340,820,340,880,315,930,290,1000,275,1060,240,1120,212,1145,205,1180,140,1237,0], cropC]
], [1664, 365]);
drawLine('ma-5', [
  [[13,385,70,378,100,420,130,490,160,545,190,572,225,570,260,530,300,445,340,385,385,315,440,300,490,290,540,296,590,320,620,350,660,400,710,430,760,432,800,415,840,375,900,350,960,300,1000,215,1040,165,1100,126,1150,130,1200,105,1250,100,1300,140,1370,195,1410,130,1480,90,1530,35,1568,15], cropA],
  [[0,465,50,480,100,490,150,510,210,500,250,440,300,370,350,325,390,313,425,315,470,365,510,395,560,385,610,395,650,370,680,300,700,275,735,255,770,185,815,150,850,160,900,215,950,290,1000,400,1040,460,1090,530,1150,620,1200,730,1240,790,1280,900,1320,990,1380,1050,1440,1070,1505,1085,1540,1140,1560,1190], cropB],
  [[0,90,60,130,125,155,170,230,220,390,270,580,312,732,350,800,425,732,470,610,520,490,565,420,620,385,680,350,725,355,760,320,800,317,850,322,900,290,950,258,1000,232,1060,210,1120,195,1145,180,1180,110,1210,0], cropC]
], [1664, 328]);

// fade at the low of the trough
add('rect', { x: 1240, y: 644, width: 100, height: 100, fill: '#000' });
add('rect', { x: 1275, y: 693, width: 10, height: 17, fill: '#04171a' });
add('rect', { x: 1287, y: 657, width: 10, height: 55, fill: '#0d0d02' });

// volume bars
const volTops = ('c118 c330 c488 c565 c618 c645 r647 r547 r583 r214 c344 r470 r512 c568 r615 r503 c622 r623 c604 c635 c667 c677 c680 c675 r650 r660 r668 r668 r605 r530 r556 c577 r625 r583 r47 c335 c510 r574 r615 r570 r605 r633 c635 c610 c650 c654 r650 c672 r417 r394 r565 c604 r660 r457 c550 c604 c640 r637 r583 r647 r475 r92 c348 c564 r565 r575 c535 ' +
  'c590 r503 c590 r507 r493 r420 c573 r335 c505 c541 c608 r610 c590 r575 c541 r647 c572 c672 r588 c650 c608 c608 c640 r597 c667 c677 c677 c600 c628 c582 c610 r520 c518 r588 r588 r573 r578 r642 r590 r605 r637 c533 r623 r605 c650 r615 r612 c645 r683 r647 r647 r620 c640 r686 r660 r670 r662 c637 c640 r420 r570 r670 r-675').split(' ');
const volBase = 1274;
volTops.forEach((t, i) => {
  const y = 1020 + Number(t.slice(1)) / 3;
  const x = barX(i);
  if (t[0] === 'c') {
    add('rect', { x: x - 5.5, y: y, width: 11, height: volBase - y, fill: CYAN });
  } else {
    add('rect', { x: x - 4.5, y: y, width: 9.5, height: volBase - y, fill: '#000', stroke: RED, 'stroke-width': 1.3 });
  }
});
drawLine('vol-10', [
  [[12,605,40,570,70,545,120,535,150,530,175,510,198,517,222,476,265,510,345,515,360,497,390,497,410,507,435,507,480,580,545,632,575,632,595,650,680,660,730,630,785,615,810,545,855,505,880,492,910,493,945,507,1020,515,1065,605,1112,628,1160,592,1230,588,1280,557,1345,550,1395,597,1415,590,1465,503,1490,515,1520,515,1545,503,1568,503], cropD],
  [[0,497,50,480,80,490,100,525,140,535,185,503,230,507,260,520,310,530,345,552,385,590,420,605,500,610,575,637,620,637,690,615,750,600,790,580,900,583,930,597,1035,610,1080,625,1150,643,1220,655,1265,655,1290,630,1335,630,1356,497], cropE]
]);
drawLine('vol-5', [
  [[12,535,35,460,62,420,105,427,130,530,152,593,175,605,198,612,225,510,245,455,270,430,315,420,340,500,370,550,410,590,455,597,480,632,510,642,550,665,570,675,630,670,660,660,700,615,740,585,785,575,810,480,840,425,880,412,905,418,935,530,975,600,1020,612,1060,632,1110,648,1160,555,1180,543,1230,530,1255,540,1290,573,1320,585,1345,580,1393,625,1415,600,1465,430,1490,425,1510,408,1535,428,1568,535], cropD],
  [[0,540,15,562,40,545,60,552,100,538,122,503,145,517,165,467,200,467,235,515,280,573,330,592,360,590,410,603,430,625,470,620,530,618,575,655,595,645,620,650,650,625,680,590,720,566,770,556,820,592,860,595,880,610,910,600,960,610,1050,640,1140,647,1225,665,1260,660,1300,600,1330,587,1345,480,1356,330], cropE]
]);

// high price note
add('path', { class: 'note-line', d: 'M792 98 L808 104 M792 98 L796 95 M792 98 L796 102' });
add('text', { x: 812, y: 112, class: 'note-label' }, '9.42');

// axes and pane borders
add('line', { x1: 1711, x2: 1711, y1: 68, y2: 1306, class: 'axis-line' });
add('line', { x1: 0, x2: 1787, y1: 764.5, y2: 764.5, class: 'axis-line' });
add('line', { x1: 1711, x2: 1787, y1: 768, y2: 768, class: 'axis-line' });
add('line', { x1: 0, x2: 1787, y1: 1282, y2: 1282, class: 'axis-line' });

function tick(y, len) {
  add('line', { x1: 1711, x2: 1711 + len, y1: y, y2: y, class: 'axis-line' });
}
priceRows.forEach(([p, y]) => {
  tick(y, 7);
  tick(y - 30.5, 3);
  add('text', { x: 1778, y: y + 6, class: 'axis-label' }, p.toFixed(2));
});
volRows.forEach(([v, y]) => {
  tick(y, 7);
  tick(y + 30, 3);
  if (v !== 12000) add('text', { x: 1778, y: y + 7, class: 'axis-label' }, v);
});

add('rect', { x: 1712, y: 899, width: 73, height: 22, fill: '#00008b' });
add('text', { x: 1738, y: 916, class: 'box-label' }, '11566');
add('rect', { x: 1712, y: 1259, width: 48, height: 21, fill: 'none', stroke: '#a00000', 'stroke-width': 1.5 });
add('text', { x: 1736, y: 1276, class: 'x-label' }, 'X100');

// markers above the volume pane
add('rect', { x: 356, y: 745, width: 18, height: 17, fill: '#103878' });
add('text', { x: 365, y: 758, class: 'mark-label' }, '财');
add('rect', { x: 1204, y: 751, width: 19, height: 11, fill: '#b85020' });
add('text', { x: 1213.5, y: 761, class: 'mark-label' }, '预');
add('rect', { x: 1242, y: 751, width: 20, height: 11, fill: '#207018' });
add('text', { x: 1252, y: 761, class: 'mark-label' }, '跌');
add('rect', { x: 1627, y: 743, width: 16, height: 19, fill: '#884810' });
add('rect', { x: 1643, y: 743, width: 17, height: 19, fill: '#801010' });
add('text', { x: 1635, y: 758, class: 'mark-label mark-wide' }, '移');
add('text', { x: 1651.5, y: 758, class: 'mark-label mark-wide' }, '涨');

// date axis
[[171, '10'], [391, '11'], [673, '12'], [943, '1'], [1226, '2'], [1419, '3']].forEach(([x, label]) => {
  add('line', { x1: x, x2: x, y1: 1282, y2: 1306, stroke: '#a00000', 'stroke-width': 1.5 });
  add('text', { x: x + 3, y: 1302, class: 'date-label' }, label);
});
[228, 281, 336, 461, 532, 598, 740, 1013, 1085, 1157, 1275, 1324, 1371, 1480, 1550, 1620].forEach(x => {
  add('line', { x1: x, x2: x, y1: 1282, y2: 1287, stroke: '#a00000', 'stroke-width': 1.5 });
});
add('text', { x: 7, y: 1302, class: 'date-label' }, '2023年');
add('rect', { x: 786, y: 1283, width: 116, height: 23, fill: '#00008b' });
add('text', { x: 844, y: 1301, class: 'date-focus' }, '2023/12/14/四');
add('text', { x: 1729, y: 1302, class: 'date-period' }, '日线');
```
